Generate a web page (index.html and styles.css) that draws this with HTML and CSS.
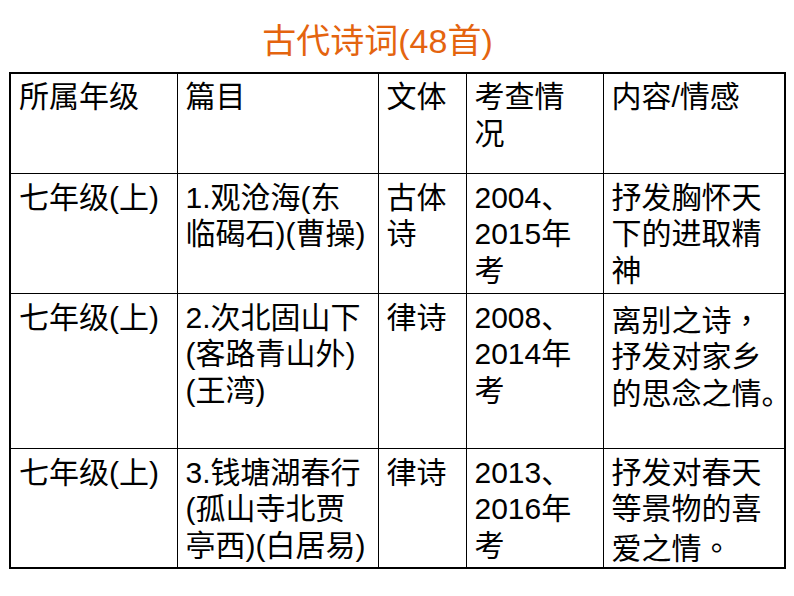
FILE: index.html
```html
<!DOCTYPE html>
<html lang="zh-CN">
<head>
<meta charset="utf-8">
<title>古代诗词(48首)</title>
<link rel="stylesheet" href="styles.css">
</head>
<body>
<h1 class="title">古代诗词(48首)</h1>
<table class="poems">
  <colgroup>
    <col class="c-grade">
    <col class="c-title">
    <col class="c-form">
    <col class="c-exam">
    <col class="c-theme">
  </colgroup>
  <thead>
    <tr class="row-head">
      <th>所属年级</th>
      <th>篇目</th>
      <th>文体</th>
      <th>考查情<br>况</th>
      <th>内容/情感</th>
    </tr>
  </thead>
  <tbody>
    <tr class="row-a">
      <td>七年级(上)</td>
      <td>1.观沧海(东<br>临碣石)(曹操)</td>
      <td>古体<br>诗</td>
      <td>2004、<br>2015年<br>考</td>
      <td>抒发胸怀天<br>下的进取精<br>神</td>
    </tr>
    <tr class="row-b">
      <td>七年级(上)</td>
      <td>2.次北固山下<br>(客路青山外)<br>(王湾)</td>
      <td>律诗</td>
      <td>2008、<br>2014年<br>考</td>
      <td>离别之诗<span class="tc" lang="zh-TW">，</span><br>抒发对家乡<br>的思念之情<span class="tight">。</span></td>
    </tr>
    <tr class="row-c">
      <td>七年级(上)</td>
      <td>3.钱塘湖春行<br>(孤山寺北贾<br>亭西)(白居易)</td>
      <td>律诗</td>
      <td>2013、<br>2016年<br>考</td>
      <td>抒发对春天<br>等景物的喜<br>爱之情<span class="tc" lang="zh-TW">。</span></td>
    </tr>
  </tbody>
</table>
</body>
</html>
```

FILE: styles.css
```css
html, body {
  margin: 0;
  padding: 0;
  background: #ffffff;
}

body {
  width: 794px;
  height: 596px;
  overflow: hidden;
  font-family: "Liberation Sans", "Noto Sans CJK SC", sans-serif;
  color: #000000;
}

.title {
  margin: 0;
  height: 72px;
  padding: 21px 39px 0 0;
  box-sizing: border-box;
  text-align: center;
  font-size: 34px;
  line-height: 40px;
  font-weight: normal;
  color: #e4640f;
}

.poems {
  margin-left: 9px;
  width: 777px;
  border-collapse: collapse;
  table-layout: fixed;
  border: 2px solid #000000;
}

.c-grade { width: 167px; }
.c-title { width: 201px; }
.c-form  { width: 88px; }
.c-exam  { width: 137px; }
.c-theme { width: 182px; }

.poems th,
.poems td {
  border: 1px solid #000000;
  padding: 6px 0 0 8px;
  vertical-align: top;
  text-align: left;
  font-weight: normal;
  font-size: 30px;
  line-height: 36.5px;
  white-space: nowrap;
}

.row-head { height: 100px; }
.row-head th { padding-top: 5px; }
.row-a { height: 120px; }
.row-b { height: 155px; }
.row-c { height: 120px; }

.tc {
  font-family: "Noto Sans CJK TC", sans-serif;
}

.tight {
  display: inline-block;
  width: 0.6em;
  overflow: visible;
}
```
